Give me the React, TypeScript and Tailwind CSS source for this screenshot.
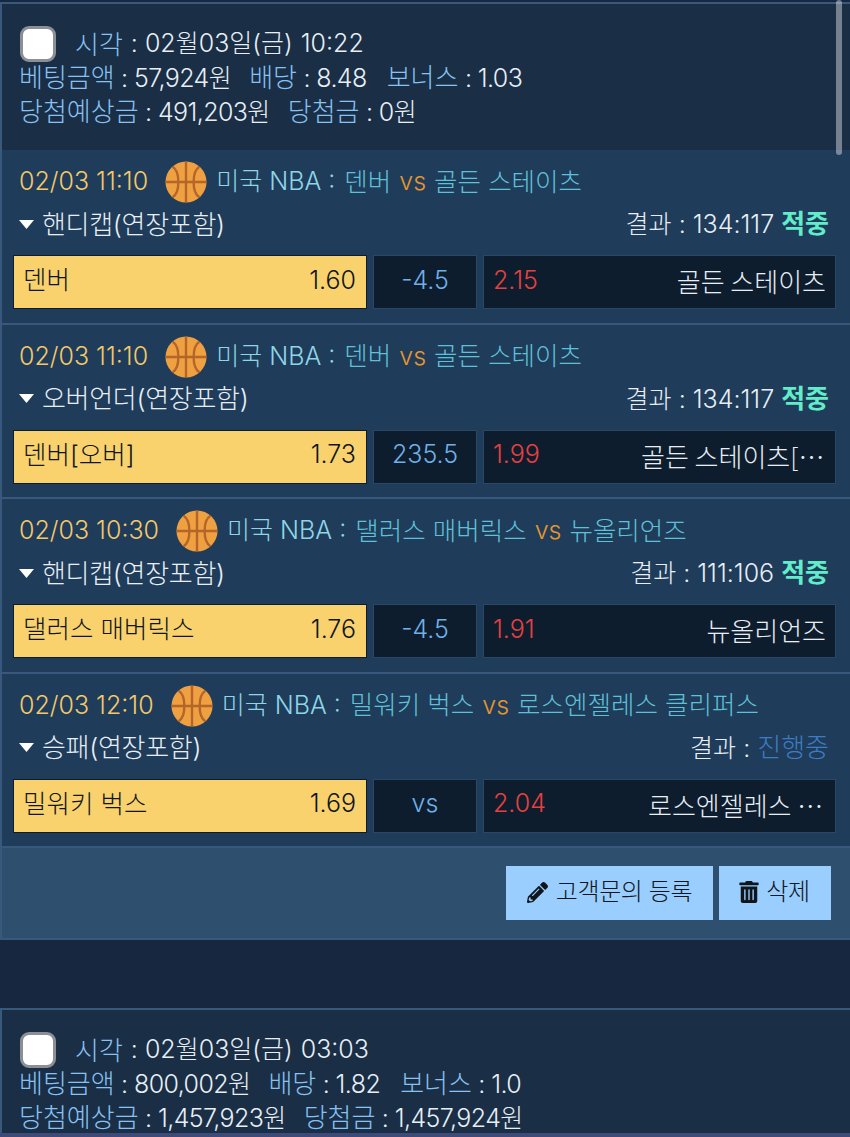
import React from 'react';
import { FaPencilAlt, FaTrashAlt } from 'react-icons/fa';

const games = [
  { time: '02/03 11:10', home: '덴버', away: '골든 스테이츠', market: '핸디캡(연장포함)', score: '134:117', done: true, pick: '덴버', homeOdds: '1.60', line: '-4.5', awayOdds: '2.15', awayName: '골든 스테이츠', nameClass: 'w-[185px]' },
  { time: '02/03 11:10', home: '덴버', away: '골든 스테이츠', market: '오버언더(연장포함)', score: '134:117', done: true, pick: '덴버[오버]', homeOdds: '1.73', line: '235.5', awayOdds: '1.99', awayName: '골든 스테이츠[언더]', nameClass: 'w-[185px]' },
  { time: '02/03 10:30', home: '댈러스 매버릭스', away: '뉴올리언즈', market: '핸디캡(연장포함)', score: '111:106', done: true, pick: '댈러스 매버릭스', homeOdds: '1.76', line: '-4.5', awayOdds: '1.91', awayName: '뉴올리언즈', nameClass: 'w-[185px]' },
  { time: '02/03 12:10', home: '밀워키 벅스', away: '로스엔젤레스 클리퍼스', market: '승패(연장포함)', score: '', done: false, pick: '밀워키 벅스', homeOdds: '1.69', line: 'vs', awayOdds: '2.04', awayName: '로스엔젤레스 클리퍼스', nameClass: 'w-[178px]' },
];

function Basketball() {
  return (
    <svg width="42" height="42" viewBox="0 0 44 44" className="shrink-0">
      <circle cx="22" cy="22" r="21.5" fill="#efa041" />
      <path d="M22 1v42M1 22h42M8 6c8 5 8 27 0 32M36 6c-8 5-8 27 0 32" fill="none" stroke="#b4652a" strokeWidth="2.5" />
    </svg>
  );
}

function Summary({ time, amount, odds, bonus, expected, won }: { time: string; amount: string; odds: string; bonus: string; expected: string; won: string }) {
  return (
    <div className="bg-[#1a2e46] pl-[17px] pt-[20px] h-[146px]">
      <div className="flex items-center h-[40px]">
        <div className="w-[36px] h-[36px] rounded-[9px] bg-white border-[3px] border-[#8c8f96] mr-[19px] ml-[1px] -mt-[1px]"></div>
        <span className="text-[#86c2f2]">시각</span>
        <span className="text-[#e8eef4] ml-[8px] text-[25px]">: 02월03일(금)</span>
        <span className="text-[#e8eef4] ml-[8px] text-[25px]">{time}</span>
      </div>
      <div className="h-[34px] leading-[34px] -mt-[3px] whitespace-nowrap">
        <span className="text-[#86c2f2]">베팅금액</span>
        <span className="text-[#e8eef4] text-[25px] tracking-[-0.6px]"> : {amount}</span>
        <span className="text-[#86c2f2] ml-[18px]">배당</span>
        <span className="text-[#e8eef4] text-[25px] tracking-[-0.6px]"> : {odds}</span>
        <span className="text-[#86c2f2] ml-[20px]">보너스</span>
        <span className="text-[#e8eef4] text-[25px] tracking-[-0.6px]"> : {bonus}</span>
      </div>
      <div className="h-[34px] leading-[34px] whitespace-nowrap">
        <span className="text-[#86c2f2]">당첨예상금</span>
        <span className="text-[#e8eef4] text-[25px] tracking-[-0.6px]"> : {expected}</span>
        <span className="text-[#86c2f2] ml-[18px]">당첨금</span>
        <span className="text-[#e8eef4] text-[25px] tracking-[-0.6px]"> : {won}</span>
      </div>
    </div>
  );
}

function GameRow({ game }: { game: (typeof games)[number] }) {
  return (
    <div className="bg-[#1f3c5a] border-b-2 border-[#38597c] h-[174.5px] pl-[11px] pr-[14px] pt-[10px]">
      <div className="flex items-center h-[44px] pl-[6px] whitespace-nowrap">
        <span className="text-[#f3c969] mr-[17px] text-[25px]">{game.time}</span>
        <Basketball />
        <span className="text-[#8ed5e6] ml-[9px] text-[25px]">미국 NBA :</span>
        <span className="text-[#5fc1d8] ml-[9px] text-[25.5px]">{game.home}</span>
        <span className="text-[#e5952f] mx-[8px] text-[25px]">vs</span>
        <span className="text-[#5fc1d8] text-[25.5px]">{game.away}</span>
      </div>
      <div className="flex items-center justify-between h-[42px] pl-[6px] pr-[7px] pb-[2px]">
        <div className="flex items-center text-[#e8eef4] tracking-[-0.3px]">
          <svg width="15" height="9" viewBox="0 0 15 9" className="mr-[8px]">
            <polygon points="0,0 15,0 7.5,9" fill="#ffffff" />
          </svg>
          {game.market}
        </div>
        <div className="text-[#e8eef4] text-[25px]">
          결과 : {game.done ? game.score : ''}
          {game.done ? (
            <span className="text-[#62ecc9] font-bold ml-[7px] text-[26px]">적중</span>
          ) : (
            <span className="text-[#3d7cc4] text-[26px]">진행중</span>
          )}
        </div>
      </div>
      <div className="flex gap-[6px] h-[54px] mt-[9px]">
        <div className="w-[354px] bg-[#f9d26e] border border-[#0e1d2e] flex items-center justify-between pl-[9px] pr-[10px] pb-[3px] text-[#10151c]">
          <span className="text-[25.5px]">{game.pick}</span>
          <span className="text-[25px]">{game.homeOdds}</span>
        </div>
        <div className="w-[104px] bg-[#0e1d2e] border border-[#2a4767] flex items-center justify-center pb-[3px] text-[#6fb0e8] text-[25px]">
          {game.line}
        </div>
        <div className="flex-1 min-w-0 bg-[#0e1d2e] border border-[#2a4767] flex items-center justify-between pl-[9px] pr-[9px] pb-[3px]">
          <span className="text-[#e5413f] shrink-0 text-[25px]">{game.awayOdds}</span>
          <span className={`text-[#e8eef4] truncate text-right font-[family-name:'Noto_Sans_CJK_KR',sans-serif] ${game.nameClass}`}>{game.awayName}</span>
        </div>
      </div>
    </div>
  );
}

export default function App() {
  return (
    <div className="relative w-[850px] h-[1137px] overflow-hidden bg-[#16273f] pt-[2px] text-[26px] font-light font-[family-name:Inter,'Noto_Sans_CJK_KR',sans-serif]">
      <div className="border-t-2 border-l-2 border-b-2 border-[#38597c]">
        <Summary time="10:22" amount="57,924원" odds="8.48" bonus="1.03" expected="491,203원" won="0원" />
        {games.map((game, i) => (
          <GameRow key={i} game={game} />
        ))}
        <div className="bg-[#2f4f6e] h-[90px] flex justify-end items-start gap-[6px] pt-[18px] pr-[19px] text-[#10151c] text-[24px] tracking-[-0.4px]">
          <button className="w-[207px] h-[54px] bg-[#99ceff] flex items-center justify-center gap-[8px] pb-[2px]">
            <FaPencilAlt size={21} />
            고객문의 등록
          </button>
          <button className="w-[112px] h-[54px] bg-[#99ceff] flex items-center justify-center gap-[6px] pb-[2px] pr-[2px]">
            <FaTrashAlt size={22} />
            삭제
          </button>
        </div>
      </div>
      <div className="h-[68px]"></div>
      <div className="border-t-2 border-l-2 border-[#38597c]">
        <Summary time="03:03" amount="800,002원" odds="1.82" bonus="1.0" expected="1,457,923원" won="1,457,924원" />
      </div>
      <div className="absolute right-[8px] top-0 w-[6px] h-[155px] rounded-full bg-white/40"></div>
      <div className="absolute left-0 right-0 bottom-0 h-[4px] bg-[#3e4a78]"></div>
    </div>
  );
}
